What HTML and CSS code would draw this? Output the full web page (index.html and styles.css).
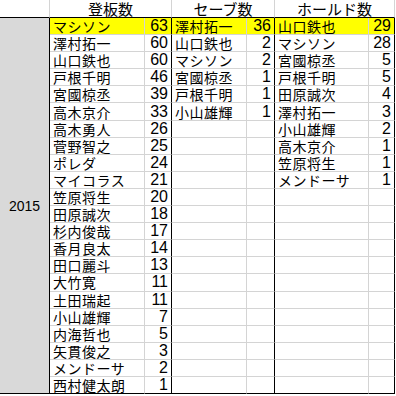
FILE: index.html
```html
<!DOCTYPE html>
<html lang="ja">
<head>
<meta charset="utf-8">
<link rel="stylesheet" href="styles.css">
</head>
<body>
<div class="sheet">
  <div class="h blank"></div>
  <div class="h">登板数</div>
  <div class="h">セーブ数</div>
  <div class="h">ホールド数</div>

  <div class="year">2015</div>

  <div class="n hl">マシソン</div><div class="v hl">63</div><div class="n hl">澤村拓一</div><div class="v hl">36</div><div class="n hl">山口鉄也</div><div class="v hl">29</div>
  <div class="n">澤村拓一</div><div class="v">60</div><div class="n">山口鉄也</div><div class="v">2</div><div class="n">マシソン</div><div class="v">28</div>
  <div class="n">山口鉄也</div><div class="v">60</div><div class="n">マシソン</div><div class="v">2</div><div class="n">宮國椋丞</div><div class="v">5</div>
  <div class="n">戸根千明</div><div class="v">46</div><div class="n">宮國椋丞</div><div class="v">1</div><div class="n">戸根千明</div><div class="v">5</div>
  <div class="n">宮國椋丞</div><div class="v">39</div><div class="n">戸根千明</div><div class="v">1</div><div class="n">田原誠次</div><div class="v">4</div>
  <div class="n">高木京介</div><div class="v">33</div><div class="n">小山雄輝</div><div class="v">1</div><div class="n">澤村拓一</div><div class="v">3</div>
  <div class="n">高木勇人</div><div class="v">26</div><div class="n"></div><div class="v"></div><div class="n">小山雄輝</div><div class="v">2</div>
  <div class="n">菅野智之</div><div class="v">25</div><div class="n"></div><div class="v"></div><div class="n">高木京介</div><div class="v">1</div>
  <div class="n">ポレダ</div><div class="v">24</div><div class="n"></div><div class="v"></div><div class="n">笠原将生</div><div class="v">1</div>
  <div class="n">マイコラス</div><div class="v">21</div><div class="n"></div><div class="v"></div><div class="n">メンドーサ</div><div class="v">1</div>
  <div class="n">笠原将生</div><div class="v">20</div><div class="n"></div><div class="v"></div><div class="n"></div><div class="v"></div>
  <div class="n">田原誠次</div><div class="v">18</div><div class="n"></div><div class="v"></div><div class="n"></div><div class="v"></div>
  <div class="n">杉内俊哉</div><div class="v">17</div><div class="n"></div><div class="v"></div><div class="n"></div><div class="v"></div>
  <div class="n">香月良太</div><div class="v">14</div><div class="n"></div><div class="v"></div><div class="n"></div><div class="v"></div>
  <div class="n">田口麗斗</div><div class="v">13</div><div class="n"></div><div class="v"></div><div class="n"></div><div class="v"></div>
  <div class="n">大竹寛</div><div class="v">11</div><div class="n"></div><div class="v"></div><div class="n"></div><div class="v"></div>
  <div class="n">土田瑞起</div><div class="v">11</div><div class="n"></div><div class="v"></div><div class="n"></div><div class="v"></div>
  <div class="n">小山雄輝</div><div class="v">7</div><div class="n"></div><div class="v"></div><div class="n"></div><div class="v"></div>
  <div class="n">内海哲也</div><div class="v">5</div><div class="n"></div><div class="v"></div><div class="n"></div><div class="v"></div>
  <div class="n">矢貫俊之</div><div class="v">3</div><div class="n"></div><div class="v"></div><div class="n"></div><div class="v"></div>
  <div class="n">メンドーサ</div><div class="v">2</div><div class="n"></div><div class="v"></div><div class="n"></div><div class="v"></div>
  <div class="n last">西村健太朗</div><div class="v last">1</div><div class="n last"></div><div class="v last"></div><div class="n last"></div><div class="v last"></div>
</div>
</body>
</html>
```

FILE: styles.css
```css
html, body {
  margin: 0;
  padding: 0;
  background: #ffffff;
}

.sheet {
  display: grid;
  grid-template-columns: 50px 95px 27px 75px 28px 94px 26px;
  grid-template-rows: 18px repeat(22, 17.1px);
  width: 395px;
  color: #000000;
  font-family: "Noto Sans CJK JP", sans-serif;
  font-size: 14px;
}

.sheet > div {
  box-sizing: border-box;
  border-right: 1px solid #d4d4d4;
  border-bottom: 1px solid #d4d4d4;
  white-space: nowrap;
  display: flex;
  align-items: center;
  line-height: 1;
}

.h {
  grid-column: span 2;
  justify-content: center;
  align-items: flex-end;
  padding-bottom: 1px;
  font-size: 15px;
  border-bottom-color: #000000 !important;
}

.sheet > .blank {
  grid-column: span 1;
}

.year {
  grid-row: span 22;
  background: #d9d9d9;
  border-right-color: #000000 !important;
  border-bottom-color: #000000 !important;
  justify-content: center;
  font-family: "Liberation Sans", Arial, sans-serif;
  font-size: 14px;
}

.n {
  padding-left: 3px;
  letter-spacing: 0.5px;
}

.v {
  justify-content: flex-end;
  padding-right: 3px;
  font-family: "Liberation Sans Narrow", "Liberation Sans", Arial, sans-serif;
  font-size: 16px;
  border-right-color: #000000 !important;
}

.hl {
  background: #ffff00;
}

.last {
  border-bottom-color: #000000 !important;
}
```
